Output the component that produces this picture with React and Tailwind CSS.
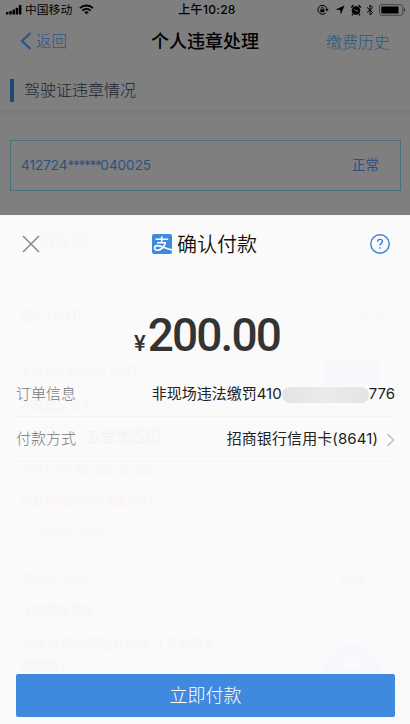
import React from 'react';

const ghost = 'absolute left-[21px] whitespace-nowrap leading-5';

function StatusBar() {
    return (
        <div className="grid h-[18px] grid-cols-[1fr_auto_1fr] items-center pl-[5px] pr-[4px] text-[12px] leading-[18px] text-black">
            <div className="flex items-center">
                <svg className="shrink-0" width="17" height="10" viewBox="0 0 17 10" fill="currentColor">
                    <rect x="1" y="7" width="2.5" height="2.6" rx=".5" />
                    <rect x="4.3" y="6" width="2.5" height="3.6" rx=".5" />
                    <rect x="7.5" y="4.5" width="2.5" height="5.1" rx=".5" />
                    <rect x="10.7" y="2.8" width="2.5" height="6.8" rx=".5" />
                    <rect x="13.9" y="0" width="2.5" height="9.6" rx=".5" />
                </svg>
                <span className="ml-[3px] w-[47px] whitespace-nowrap pt-px text-[11.8px]">中国移动</span>
                <svg className="ml-[7px] shrink-0" width="15" height="11" viewBox="0 0 15 11" fill="none" stroke="currentColor" strokeWidth="1.9">
                    <path d="M1 4.2C4.6.5 10.4.5 14 4.2" />
                    <path d="M3.4 6.6c2.3-2.3 5.9-2.3 8.2 0" />
                    <path d="M5.2 8.1 7.5 10.6 9.8 8.1C8.5 7 6.5 7 5.2 8.1Z" fill="currentColor" stroke="none" />
                </svg>
            </div>
            <div className="pl-[3px] pt-px text-[12px] font-medium tracking-[0.3px]">上午10:28</div>
            <div className="flex items-center justify-end">
                <svg width="12" height="12" viewBox="0 0 12 12" fill="none" stroke="currentColor">
                    <path d="M8.6 9A4.5 4.5 0 1 1 9.9 5.2" />
                    <path d="m8.2 5 1.7 2.4L11.7 5Z" fill="currentColor" stroke="none" />
                    <rect x="3.4" y="5.3" width="4" height="3" fill="currentColor" stroke="none" />
                    <path d="M4.3 5.4V4.2a1.1 1.1 0 0 1 2.2 0v1.2" strokeWidth=".8" />
                </svg>
                <svg className="ml-[6px]" width="10" height="10" viewBox="0 0 10 10" fill="currentColor">
                    <path d="M9.5.6 5.8 9.4 5.2 4.9.6 4.5Z" />
                </svg>
                <svg className="ml-[5px]" width="12" height="12" viewBox="0 0 12 12">
                    <circle cx="6" cy="6.5" r="4.3" fill="currentColor" />
                    <path d="M1.2 3.5 3.5 1.3M10.8 3.5 8.5 1.3M3 10l-1 1.2M9 10l1 1.2" stroke="currentColor" strokeWidth="1.5" />
                    <path d="M4.1 4.8 6 6.8h2.2" stroke="#7f7f7f" fill="none" strokeWidth=".9" />
                </svg>
                <svg className="ml-[4px]" width="8" height="12" viewBox="0 0 8 12" fill="none" stroke="currentColor">
                    <path d="m1 3.4 5.7 5L4 11V1l2.7 2.6L1 8.6" />
                </svg>
                <svg className="ml-[5px]" width="27" height="12" viewBox="0 0 27 12">
                    <rect x=".5" y=".7" width="23.4" height="10.6" rx="2" fill="none" stroke="#444" />
                    <rect x="2.3" y="2.4" width="17.2" height="7.2" rx=".7" fill="currentColor" />
                    <path d="M25.2 4v4c1.3-.5 1.3-3.5 0-4Z" fill="#222" />
                </svg>
            </div>
        </div>
    );
}

// Page content that shows very faintly through the payment sheet
function FaintPage() {
    return (
        <div aria-hidden="true" className="pointer-events-none absolute inset-0 overflow-hidden text-[#f6f6f6]">
            <div className="absolute left-[10px] top-[14px] h-[21px] w-[4px] bg-[#f8f9fa]" />
            <div className="absolute left-[40px] top-[15px] text-[16px] leading-5">的车辆</div>
            <div className={`${ghost} top-[91px] text-[14px]`}>豫P·HM11</div>
            <div className="absolute left-[357px] top-[91px] text-[14px] text-[#f8f8f8]">查看</div>
            <div className={`${ghost} top-[146px] text-[13px]`}>410100 60001 7271</div>
            <div className="absolute left-[325px] top-[146px] h-[24px] w-[55px] bg-[#f6f8fb]" />
            <div className={`${ghost} top-[182px] text-[12px] font-medium`}>不按规定停车</div>
            <div className="absolute left-[86px] top-[212px] text-[15px] leading-5 text-[#f4f4f4]">五里堡西街</div>
            <div className={`${ghost} top-[245px] text-[13px]`}>2017-12-10&nbsp; 09:30:00</div>
            <div className={`${ghost} top-[277px] text-[12px] text-[#fbf4f4]`}>已处理罚200元未缴纳0元</div>
            <div className={`${ghost} top-[309px] text-[14px] text-[#f8f8f8]`}>已处理未缴款</div>
            <div className="absolute left-[21px] right-0 top-[339px] h-px bg-[#f7f7f7]" />
            <div className={`${ghost} top-[353px] text-[12px] text-[#f7f7f7]`}>410100 60001 2279</div>
            <div className="absolute left-[341px] top-[356px] text-[12px] text-[#f7f7f7]">缴费</div>
            <div className={`${ghost} top-[386px] text-[12.5px]`}>不按规定停车</div>
            <div className={`${ghost} top-[418px] text-[13px]`}>河南省郑州市陇杜北街（卫生路至</div>
            <div className={`${ghost} top-[440px] text-[13px]`}>嵩路段）</div>
            <div className="absolute left-[322px] top-[430px] h-[60px] w-[60px] rounded-full bg-[#f6f8fb]" />
            <div className="absolute left-[343px] top-[442px] h-[12px] w-[18px] bg-[#fafbfc]" />
        </div>
    );
}

function AlipayLogo() {
    return (
        <svg width="20" height="20" viewBox="0 0 20 20">
            <rect width="20" height="20" rx="2" fill="#3f89df" />
            <g fill="none" stroke="#fff" strokeWidth="1.6">
                <path d="M3.6 5.3h12.6M9.7 2.5v6.2M5 8.7h8.6" />
                <path d="M13.6 8.3c-1.3 4.3-4.5 8-7.9 8-2.2 0-3.2-1-3.2-2.3 0-1.5 1.3-2.4 3.1-2.4 3.8 0 7.6 2.7 14.4 4.3" />
            </g>
        </svg>
    );
}

function PaymentSheet() {
    return (
        <section className="relative flex h-[509px] flex-col bg-[#fafafa]">
            <FaintPage />
            <header className="relative grid h-[59px] shrink-0 grid-cols-[50px_1fr_50px] items-center border-b border-[#f6f6f6]">
                <svg className="ml-[22px]" width="18" height="18" viewBox="0 0 18 18" fill="none" stroke="#888" strokeWidth="1.5">
                    <path d="m1 1 16 16M17 1 1 17" />
                </svg>
                <div className="flex items-center justify-center">
                    <AlipayLogo />
                    <h2 className="ml-[5px] mr-px pt-[2px] text-[20px] font-[350] leading-7 text-[#111]">确认付款</h2>
                </div>
                <svg className="ml-[10px]" width="20" height="20" viewBox="0 0 20 20" fill="none" stroke="#3c82d4" strokeWidth="1.4">
                    <circle cx="10" cy="10" r="9.2" />
                    <path d="M7.6 7.7c0-1.5 1-2.3 2.4-2.3s2.5.8 2.5 2.1c0 1.8-2.5 2-2.5 4M10 13.3v1.5" />
                </svg>
            </header>
            <div className="relative flex h-[98px] shrink-0 items-baseline justify-center pl-[4px] pt-[31px] text-[#333]">
                <span className="font-[Roboto] text-[22px] font-medium leading-[60px]">¥</span>
                <span className="ml-[2px] font-[Roboto] text-[46px] font-medium leading-[60px] tracking-[-1.9px]">200.00</span>
            </div>
            <div className="relative ml-4 mr-[15px] flex h-[45px] shrink-0 items-center justify-between border-b border-[#f3f3f3] pt-px text-[15px]">
                <span className="font-light text-[#777]">订单信息</span>
                <div className="flex items-center text-[#222]">
                    <span>非现场违法缴罚410</span>
                    <span className="h-[16px] w-[87px] rounded-full bg-linear-to-r from-[#e4e4e4] via-[#ebebeb] to-[#e4e4e6]" />
                    <span>776</span>
                </div>
            </div>
            <div className="relative ml-4 mr-[15px] flex h-[45px] shrink-0 items-center justify-between border-b border-[#f3f3f3] pt-px text-[15px]">
                <span className="font-light text-[#777]">付款方式</span>
                <div className="flex items-center text-[#222]">
                    <span className="tracking-[0.1px]">招商银行信用卡(8641)</span>
                    <svg className="ml-[8px]" width="9" height="14" viewBox="0 0 9 14" fill="none" stroke="#bbb" strokeWidth="1.4">
                        <path d="m1.5 1 6 6-6 6" />
                    </svg>
                </div>
            </div>
            <button className="relative mb-[7px] ml-4 mr-[15px] mt-auto h-[43px] shrink-0 rounded-[2px] bg-[#3f89df] text-[18px] font-light text-white">
                立即付款
            </button>
        </section>
    );
}

export default function App() {
    return (
        <div className="h-[724px] w-[410px] overflow-hidden bg-[#7f7f7f] font-['Inter','Noto_Sans_CJK_SC',sans-serif]">
            <div className="h-[215px]">
                <StatusBar />
                <nav className="grid h-[46px] grid-cols-[1fr_auto_1fr] items-center pl-[20px] pr-[20px]">
                    <div className="flex items-center text-[15.5px] text-[#2b5684]">
                        <svg width="12" height="18" viewBox="0 0 12 18" fill="none" stroke="#24578e" strokeWidth="2.2">
                            <path d="M10.5 1 2 9l8.5 8" />
                        </svg>
                        <span className="ml-[4px] pt-[2px] font-light">返回</span>
                    </div>
                    <h1 className="text-[18px] font-medium text-black">个人违章处理</h1>
                    <span className="pt-px text-right text-[16px] font-light text-[#2b5684]">缴费历史</span>
                </nav>
                <div className="flex h-[46px] items-center pl-[10px] pt-[6px]">
                    <span className="h-[23px] w-[4px] bg-[#1e4678]" />
                    <span className="ml-[10px] text-[16px] font-light text-[#1c2431]">驾驶证违章情况</span>
                </div>
                <div className="h-[5px] bg-[#7b7b7b]" />
                <div className="ml-[10px] mr-[9px] mt-[25px] flex h-[51px] items-center justify-between border border-[#477078] pl-[10px] pr-[21px] text-[13.5px] text-[#2b5280]">
                    <span>412724<span className="tracking-[-1.3px]">******</span>040025</span>
                    <span>正常</span>
                </div>
            </div>
            <PaymentSheet />
        </div>
    );
}
